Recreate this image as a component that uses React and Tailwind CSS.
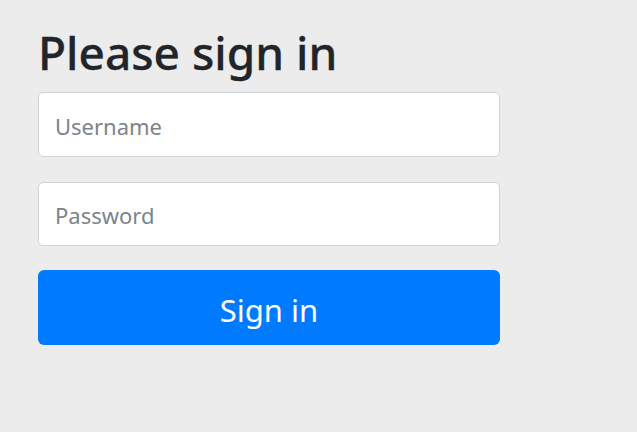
export default function App() {
  return (
    <div className="min-h-screen w-full bg-[#ececec] pl-[38px] pt-[24px]" style={{ fontFamily: '"Noto Sans", "Open Sans", sans-serif' }}>
      <form className="w-[462px]" onSubmit={(e) => e.preventDefault()}>
        <h2 className="text-[46px] leading-[56px] font-medium text-[#212529] mb-[12px] [-webkit-text-stroke:0.3px_#212529]">
          Please sign in
        </h2>
        <input
          type="text"
          placeholder="Username"
          className="block w-full h-[65px] px-[16px] pt-[2px] text-[22px] bg-white border border-[#ced4da] rounded-[5px] placeholder:text-[#7c848b] outline-none"
        />
        <input
          type="password"
          placeholder="Password"
          className="block w-full h-[64px] mt-[25px] px-[16px] pt-[2px] text-[22px] bg-white border border-[#ced4da] rounded-[5px] placeholder:text-[#7c848b] outline-none"
        />
        <button
          type="submit"
          className="block w-full h-[75px] mt-[24px] pt-[5px] bg-[#007bff] text-white text-[31px] rounded-[6px]"
        >
          Sign in
        </button>
      </form>
    </div>
  );
}
